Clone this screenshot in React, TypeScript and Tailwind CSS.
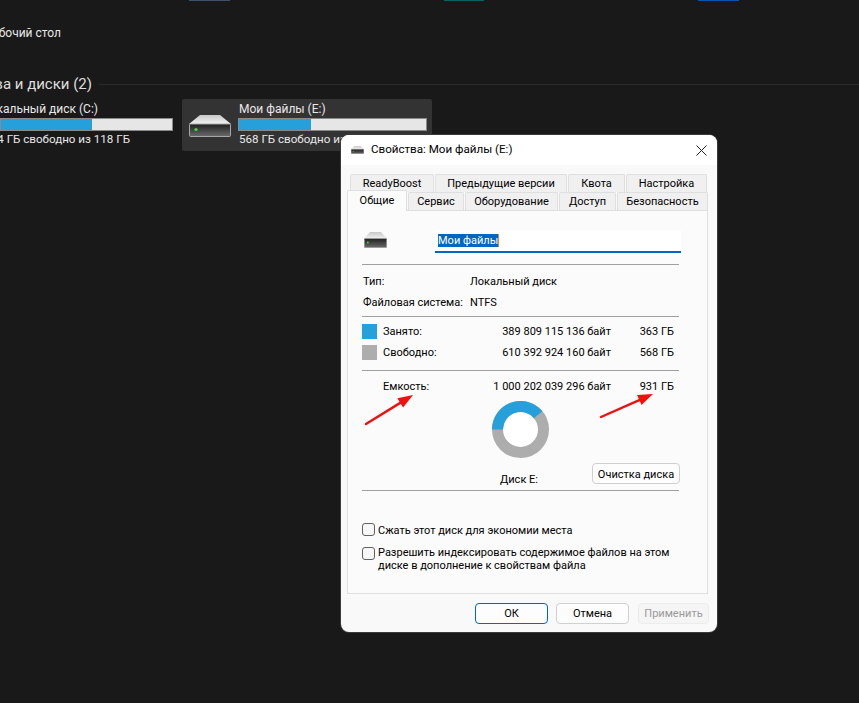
const font = { fontFamily: 'Roboto, sans-serif' };

function DriveIcon({ className, id }: { className: string; id: string }) {
  return (
    <svg className={className} viewBox="0 0 42 22" preserveAspectRatio="none">
      <defs>
        <linearGradient id={`${id}-top`} x1="0" y1="0" x2="0" y2="1">
          <stop offset="0" stopColor="#c8c8c8" />
          <stop offset="1" stopColor="#f2f2f2" />
        </linearGradient>
        <linearGradient id={`${id}-body`} x1="0" y1="0" x2="0" y2="1">
          <stop offset="0" stopColor="#1f1f1f" />
          <stop offset="1" stopColor="#6a6a6a" />
        </linearGradient>
      </defs>
      <path d="M11 0H31L42 9H0Z" fill={`url(#${id}-top)`} />
      <rect x="0.5" y="9" width="41" height="12.5" rx="1" fill={`url(#${id}-body)`} stroke="#a8a8a8" />
      <circle cx="7" cy="14.5" r="1.6" fill="#35e43a" />
    </svg>
  );
}

function Bar({ width, fill }: { width: string; fill: string }) {
  return (
    <div className={`${width} h-[13px] bg-[#e6e6e6] border border-[#8a8a8a]`}>
      <div className={`${fill} h-full bg-[#26a0da]`} />
    </div>
  );
}

const Divider = ({ className }: { className: string }) => <div className={`h-px bg-[#a0a0a0] ${className}`} />;

function Tab({ label, width }: { label: string; width: string }) {
  return (
    <div className={`${width} h-[18px] pt-[2px] flex items-center justify-center bg-[#f0f0f0] border border-b-0 border-[#dfdfdf] rounded-t-[2px] whitespace-nowrap`}>
      {label}
    </div>
  );
}

function Usage({ color, label, bytes, size }: { color: string; label: string; bytes: string; size: string }) {
  return (
    <div className="flex items-center h-[15px]">
      <div className={`w-[15px] h-[15px] ${color}`} />
      <span className="ml-[6px] w-[100px] pt-[2px]">{label}</span>
      <span className="w-[128px] pt-[2px] text-right whitespace-nowrap">{bytes}</span>
      <span className="w-[63px] pt-[2px] text-right whitespace-nowrap">{size}</span>
    </div>
  );
}

function Donut() {
  return (
    <svg className="w-[57px] h-[57px] mx-auto" viewBox="0 0 57 57">
      <circle cx="28.5" cy="28.5" r="23" fill="#ffffff" stroke="#adadad" strokeWidth="11" />
      <path d="M5.5 28.5A23 23 0 0 1 46.1 13.7" fill="none" stroke="#26a0da" strokeWidth="11" />
    </svg>
  );
}

function Check() {
  return <div className="w-[13px] h-[13px] mt-px shrink-0 rounded-[3px] border border-[#606060] bg-[#f7f7f7]" />;
}

function Arrow({ x1, y1, x2, y2 }: { x1: number; y1: number; x2: number; y2: number }) {
  const a = Math.atan2(y2 - y1, x2 - x1);
  const bx = x2 - Math.cos(a) * 15;
  const by = y2 - Math.sin(a) * 15;
  const nx = -Math.sin(a) * 5.5;
  const ny = Math.cos(a) * 5.5;
  return (
    <g>
      <line x1={x1} y1={y1} x2={bx} y2={by} stroke="#f01010" strokeWidth="2.4" strokeLinecap="round" />
      <polygon points={`${x2},${y2} ${bx + nx},${by + ny} ${bx - nx},${by - ny}`} fill="#f01010" />
    </g>
  );
}

export default function App() {
  return (
    <div className="relative w-full h-screen overflow-hidden bg-[#191919] text-[#e8e8e8] text-[12px]" style={font}>
      <div className="flex h-px">
        <div className="ml-[189px] w-[41px] bg-[#3d5266]" />
        <div className="ml-[214px] w-[40px] bg-[#0c5f63]" />
        <div className="ml-[214px] w-[41px] bg-[#0a55a8]" />
      </div>

      <div className="mt-[23px] h-[18px] w-[61px] flex items-center justify-end whitespace-nowrap">Рабочий стол</div>

      <div className="mt-[32px] h-[20px] flex items-center">
        <div className="w-[92px] flex justify-end whitespace-nowrap text-[15px] text-[#dedede]">Устройства и диски (2)</div>
        <div className="ml-[7px] flex-1 h-px bg-[#2b2b2b]" />
      </div>

      <div className="mt-[6px] flex">
        <div className="w-[173px]">
          <div className="w-[98px] h-[18px] flex items-center justify-end whitespace-nowrap">Локальный диск (C:)</div>
          <Bar width="w-[173px]" fill="w-[91px]" />
          <div className="w-[130px] h-[18px] flex items-center justify-end whitespace-nowrap text-[11.6px]">94 ГБ свободно из 118 ГБ</div>
        </div>
        <div className="ml-[9px] w-[250px] h-[52px] -mt-[1px] flex bg-[#333333] rounded-[2px]">
          <DriveIcon id="tile" className="ml-[7px] mt-[16px] w-[42px] h-[22px]" />
          <div className="ml-[7px] pt-[1px]">
            <div className="h-[18px] pl-px flex items-center whitespace-nowrap">Мои файлы (E:)</div>
            <Bar width="w-[189px]" fill="w-[72px]" />
            <div className="h-[18px] pl-px flex items-center whitespace-nowrap text-[11.6px]">568 ГБ свободно из 931 ГБ</div>
          </div>
        </div>
      </div>

      <div className="absolute left-[341px] top-[135px] w-[376px] h-[497px] rounded-[8px] overflow-hidden bg-[#f9f9f9] text-black text-[11px] shadow-[0_0_0_1px_#3a3a3a]">
        <div className="h-[30px] bg-white flex items-center">
          <DriveIcon id="title" className="ml-[10px] w-[13px] h-[8px]" />
          <span className="ml-[7px] whitespace-nowrap text-[11.6px]">Свойства: Мои файлы (E:)</span>
          <svg className="ml-auto mr-[10px] w-[11px] h-[11px]" viewBox="0 0 11 11">
            <path d="M0.5 0.5L10.5 10.5M10.5 0.5L0.5 10.5" stroke="#222" strokeWidth="1" fill="none" />
          </svg>
        </div>

        <div className="relative mt-[9px] ml-[6px] w-[361px]">
          <div className="flex gap-px pl-[3px]">
            <Tab label="ReadyBoost" width="w-[84px]" />
            <Tab label="Предыдущие версии" width="w-[132px]" />
            <Tab label="Квота" width="w-[57px]" />
            <Tab label="Настройка" width="w-[81px]" />
          </div>
          <div className="flex gap-px">
            <div className="relative z-10 -mt-[2px] w-[60px] h-[21px] -mb-px flex items-center justify-center bg-[#fbfbfb] border border-b-0 border-[#dfdfdf] rounded-t-[2px]">Общие</div>
            <Tab label="Сервис" width="w-[56px]" />
            <Tab label="Оборудование" width="w-[93px]" />
            <Tab label="Доступ" width="w-[57px]" />
            <Tab label="Безопасность" width="w-[91px]" />
          </div>

          <div className="h-[384px] bg-[#fbfbfb] border border-[#dfdfdf]">
            <div className="ml-[14px] w-[317px] pt-[19px]">
              <div className="flex h-[23px]">
                <DriveIcon id="panel" className="ml-[2px] mt-[2px] w-[23px] h-[16px]" />
                <div className="ml-[48px] w-[246px] h-[23px] -mr-[2px] bg-white border-b-2 border-[#0067c0] pl-[3px] pt-[4px]">
                  <span className="block w-fit h-[13px] leading-[13px] bg-[#0067c0] text-white border-r border-[#f08020]">Мои файлы</span>
                </div>
              </div>
              <Divider className="mt-[11px]" />
              <div className="mt-[6px] h-[20px] pt-[2px] flex items-center">
                <span className="ml-px w-[107px]">Тип:</span>
                <span>Локальный диск</span>
              </div>
              <div className="mt-px h-[20px] pt-[2px] flex items-center">
                <span className="ml-px w-[107px] whitespace-nowrap">Файловая система:</span>
                <span>NTFS</span>
              </div>
              <Divider className="mt-[4px]" />
              <div className="mt-[7px]">
                <Usage color="bg-[#26a0da]" label="Занято:" bytes="389 809 115 136 байт" size="363 ГБ" />
              </div>
              <div className="mt-[6px]">
                <Usage color="bg-[#adadad]" label="Свободно:" bytes="610 392 924 160 байт" size="568 ГБ" />
              </div>
              <Divider className="mt-[10px]" />
              <div className="mt-[5px] h-[20px] pt-[2px] flex items-center">
                <span className="ml-[21px] w-[100px]">Емкость:</span>
                <span className="w-[128px] text-right whitespace-nowrap">1 000 202 039 296 байт</span>
                <span className="w-[63px] text-right whitespace-nowrap">931 ГБ</span>
              </div>
              <div className="mt-[5px]">
                <Donut />
              </div>
              <div className="mt-[5px] h-[21px] flex items-center justify-between">
                <span className="ml-[138px] mt-[14px]">Диск E:</span>
                <div className="w-[88px] h-[21px] -mr-px pt-[3px] flex items-center justify-center bg-[#fdfdfd] border border-[#d0d0d0] rounded-[4px] whitespace-nowrap">Очистка диска</div>
              </div>
              <Divider className="mt-[6px]" />
              <div className="mt-[31px] flex gap-[3px] h-[15px]">
                <Check />
                <span className="pt-px whitespace-nowrap">Сжать этот диск для экономии места</span>
              </div>
              <div className="mt-[9px] flex gap-[3px]">
                <Check />
                <span className="leading-[13px] whitespace-nowrap">
                  Разрешить индексировать содержимое файлов на этом
                  <br />
                  диске в дополнение к свойствам файла
                </span>
              </div>
            </div>
          </div>
        </div>

        <div className="mt-[9px] flex justify-end pr-[8px]">
          <div className="w-[73px] h-[21px] pt-[2px] flex items-center justify-center bg-[#fdfdfd] border border-[#0067c0] rounded-[4px]">ОК</div>
          <div className="ml-[8px] w-[73px] h-[21px] pt-[2px] flex items-center justify-center bg-[#fdfdfd] border border-[#d0d0d0] rounded-[4px]">Отмена</div>
          <div className="ml-[9px] w-[71px] h-[21px] pt-[2px] flex items-center justify-center bg-[#f5f5f5] border border-[#ececec] rounded-[4px] text-[#9a9a9a]">Применить</div>
        </div>
      </div>

      <svg className="absolute inset-0 w-full h-full pointer-events-none">
        <Arrow x1={366} y1={424} x2={413} y2={395} />
        <Arrow x1={601} y1={417} x2={653} y2={394} />
      </svg>
    </div>
  );
}
